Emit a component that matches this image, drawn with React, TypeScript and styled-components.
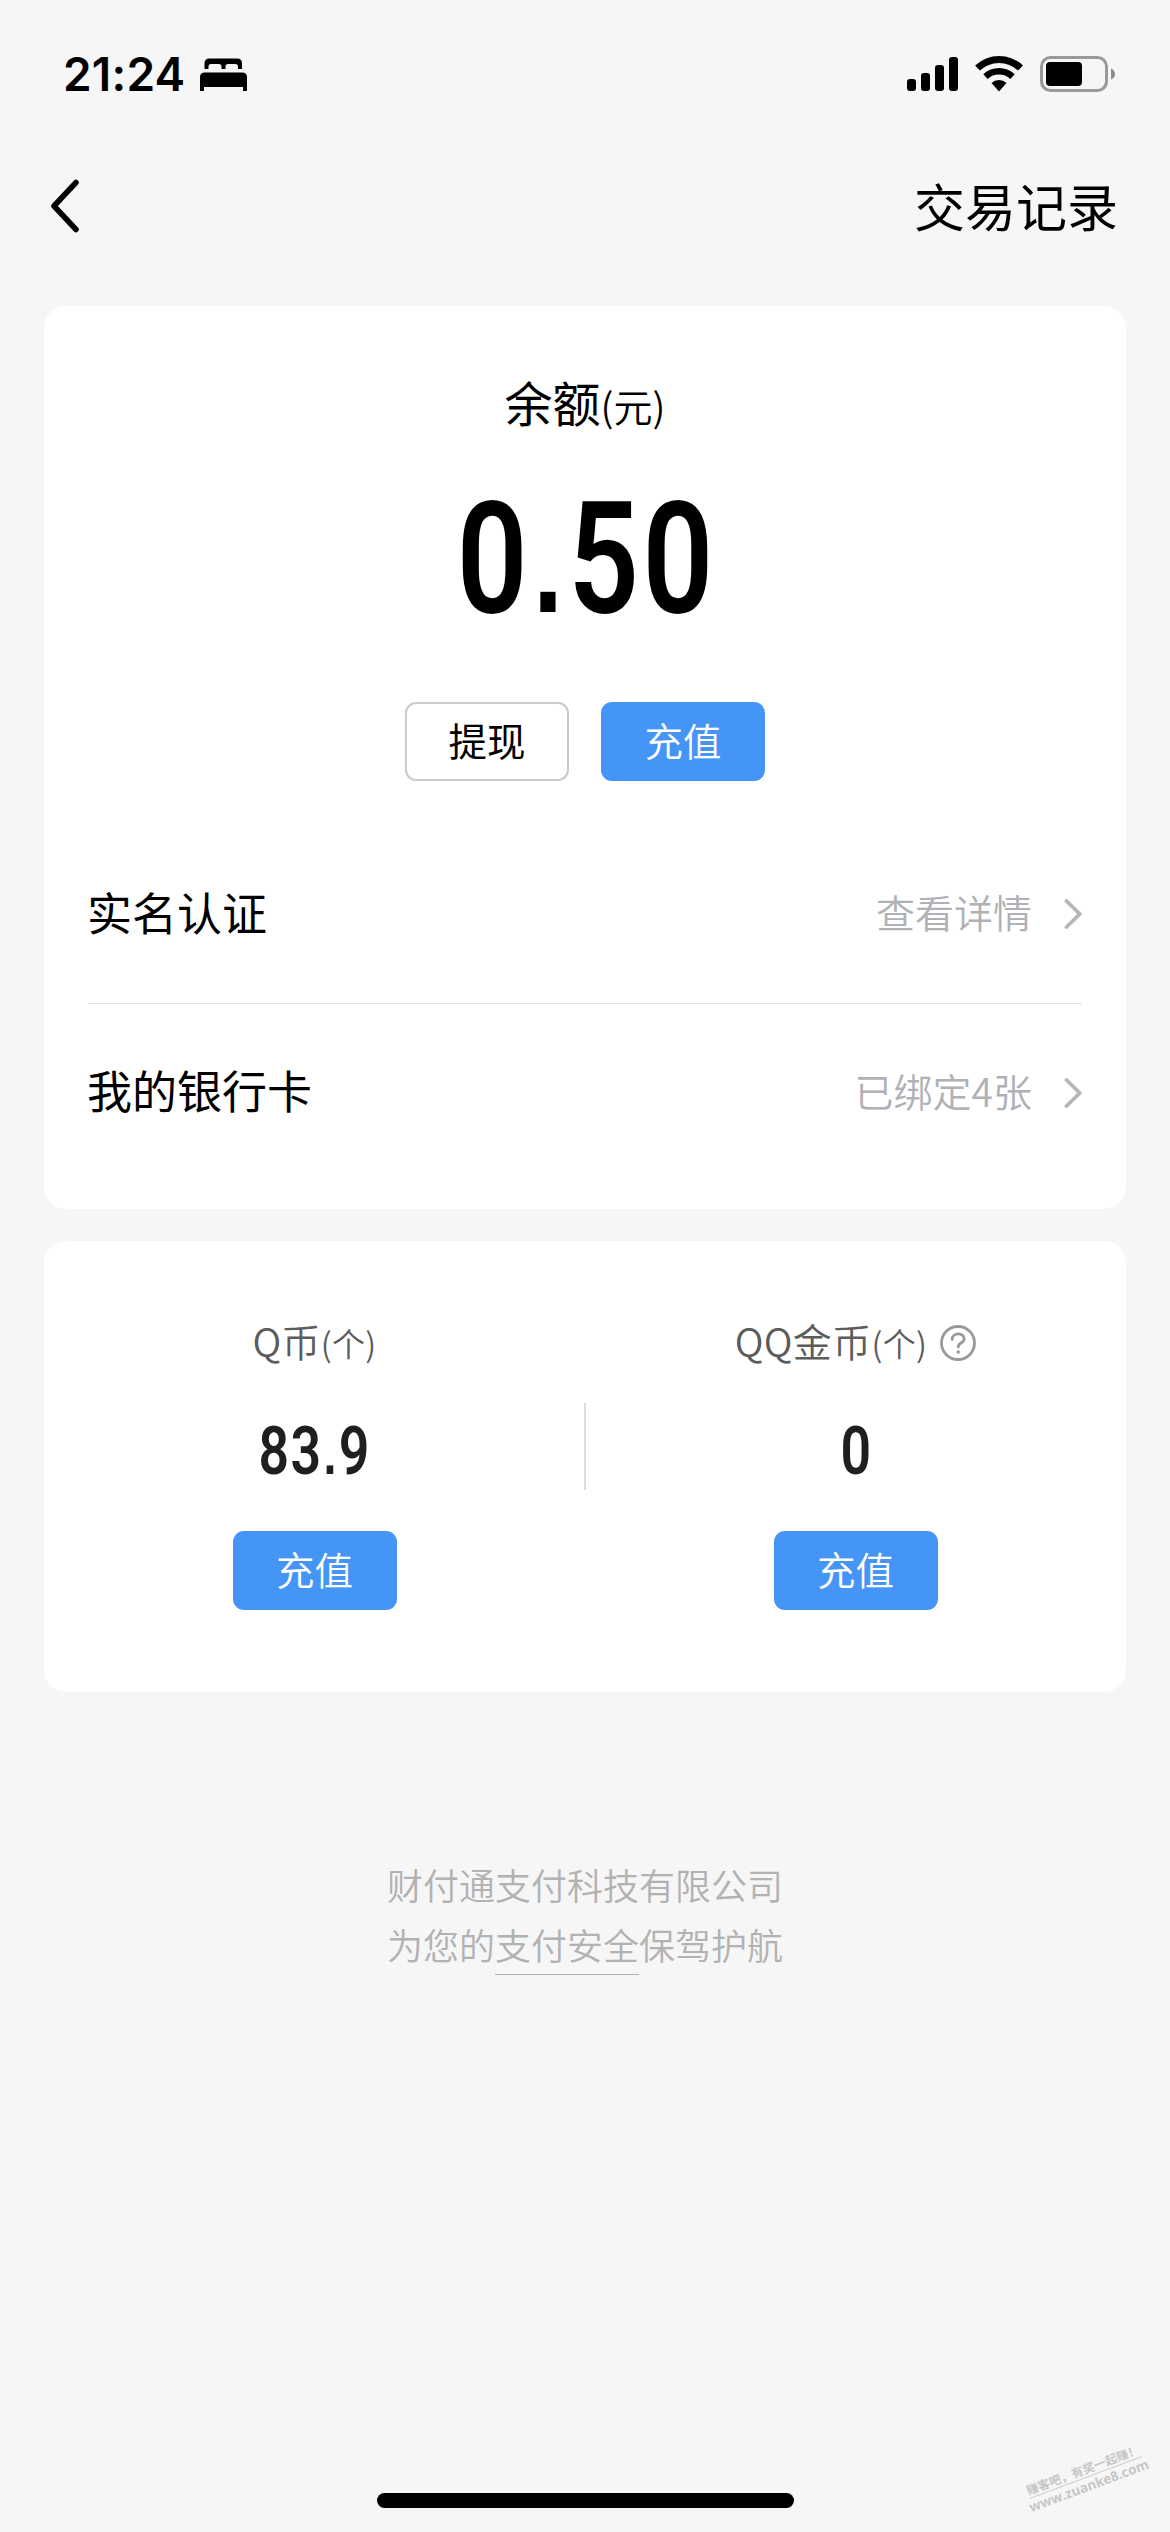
import React from "react";
import styled, { createGlobalStyle } from "styled-components";

const CJK = `"Noto Sans CJK SC", "Noto Sans", sans-serif`;

const GlobalStyle = createGlobalStyle`
  * { box-sizing: border-box; }
  html, body { margin: 0; padding: 0; background: #f6f6f6; }
  body { font-family: ${CJK}; color: #000; overflow: hidden; }
  button { font-family: inherit; margin: 0; padding: 0; }
  svg { display: block; flex: none; }
`;

const Screen = styled.div`
  width: 1170px;
  height: 2532px;
  background: #f6f6f6;
  display: flex;
  flex-direction: column;
  position: relative;
  overflow: hidden;
`;

const StatusBar = styled.div`
  height: 148px;
  flex: none;
  padding: 0 55px 0 63px;
  display: flex;
  align-items: center;
  justify-content: space-between;
`;

const StatusGroup = styled.div<{ $gap: number }>`
  display: flex;
  align-items: center;
  gap: ${(p) => p.$gap}px;
`;

const Clock = styled.span`
  font: 600 46px/56px Inter, sans-serif;
  letter-spacing: 0.2px;
`;

const NavBar = styled.header`
  height: 116px;
  flex: none;
  padding: 0 52px 0 51px;
  display: flex;
  align-items: center;
  justify-content: space-between;
`;

const NavLink = styled.span`
  font-size: 51px;
  line-height: 60px;
  padding-bottom: 3px;
`;

const Cards = styled.main`
  padding: 42px 44px 0;
  display: flex;
  flex-direction: column;
  gap: 32px;
`;

const Card = styled.section<{ $height: number }>`
  height: ${(p) => p.$height}px;
  background: #fff;
  border-radius: 22px;
`;

const BalanceCard = styled(Card)`
  padding: 62px 44px 0;
  display: flex;
  flex-direction: column;
`;

const BalanceLabel = styled.div`
  height: 66px;
  font-size: 48px;
  line-height: 66px;
  text-align: center;
`;

const Unit = styled.span<{ $size: number }>`
  font-size: ${(p) => p.$size}px;
  font-weight: 350;
`;

const Amount = styled.div<{ $size: number; $line: number; $color: string }>`
  height: ${(p) => p.$line}px;
  padding-left: ${(p) => p.$size * 0.026}px;
  font-family: Roboto, sans-serif;
  font-weight: 650;
  font-size: ${(p) => p.$size}px;
  line-height: ${(p) => p.$line}px;
  letter-spacing: 0.026em;
  color: ${(p) => p.$color};
  text-align: center;
  transform: scaleX(0.8);
`;

const Point = styled.span`
  font-family: "Liberation Sans", Arial, sans-serif;
  font-weight: 700;
  font-size: 0.87em;
  line-height: 1;
  margin: 0 0.02em;
`;

const BalanceAmount = styled.div`
  margin: 5px 0 23px;
`;

const ButtonRow = styled.div`
  display: flex;
  justify-content: center;
  gap: 32px;
`;

const Button = styled.button<{ $primary?: boolean }>`
  width: 164px;
  height: 79px;
  flex: none;
  border-radius: 11px;
  border: ${(p) => (p.$primary ? "none" : "2px solid #cacaca")};
  background: ${(p) => (p.$primary ? "#4595f7" : "#fff")};
  color: ${(p) => (p.$primary ? "#fff" : "#000")};
  font-size: 38.5px;
  font-weight: ${(p) => (p.$primary ? 350 : 400)};
  line-height: 1;
  display: flex;
  align-items: center;
  justify-content: center;
  padding-bottom: 4px;
`;

const Rows = styled.div`
  margin-top: 44px;
`;

const Row = styled.div`
  height: 178px;
  display: flex;
  align-items: center;
  justify-content: space-between;
  & + & { border-top: 1px solid #e3e3e3; }
`;

const RowTitle = styled.span`
  margin-left: -1px;
  padding-bottom: 5px;
  font-size: 45px;
  line-height: 60px;
`;

const RowValue = styled.span`
  display: flex;
  align-items: center;
  gap: 32px;
`;

const RowValueText = styled.span`
  padding-bottom: 6px;
  font-size: 39px;
  line-height: 54px;
  font-weight: 350;
  color: #b0b1b6;
`;

const CoinCard = styled(Card)`
  display: flex;
  align-items: flex-start;
`;

const CoinColumn = styled.div`
  flex: 1;
  padding-top: 74px;
  display: flex;
  flex-direction: column;
  align-items: center;
`;

const CoinLabel = styled.div`
  height: 56px;
  display: flex;
  align-items: center;
  gap: 13px;
  font-size: 39px;
  font-weight: 350;
  letter-spacing: 0.3px;
  line-height: 54px;
  color: #5c5c5c;
`;

const CoinName = styled.span`
  padding-bottom: 3px;
`;

const CoinDivider = styled.div`
  width: 2px;
  margin: 162px -1px 0;
  height: 87px;
  background: #dcdcdc;
`;

const Footer = styled.footer`
  margin-top: 162px;
  font-size: 36px;
  line-height: 60px;
  font-weight: 350;
  text-align: center;
  color: #b2b2b2;
`;

const Underlined = styled.span`
  display: inline-block;
  height: 60px;
  box-shadow: 0 1px 0 #b2b2b2;
`;

const Watermark = styled.div`
  position: absolute;
  left: 1026px;
  top: 2461px;
  width: 120px;
  transform: rotate(-20.5deg);
  color: #c6c6c6;
  font-weight: 700;
  display: flex;
  flex-direction: column;
  align-items: center;
  white-space: nowrap;
`;

const WatermarkTitle = styled.div`
  font-size: 12px;
  line-height: 16px;
  border-bottom: 1px solid #cfcfcf;
`;

const WatermarkUrl = styled.div`
  font: 700 13.4px/17px "Open Sans", sans-serif;
`;

const HomeIndicator = styled.div`
  position: absolute;
  left: 377px;
  bottom: 24px;
  width: 417px;
  height: 15px;
  border-radius: 8px;
  background: #000;
`;

const BedIcon = () => (
  <svg width="48" height="34" viewBox="0 -1 48 34">
    <path d="M4.500 11V5.500Q4.500 0.500 9.500 0.500H37Q42 0.500 42 5.500V11H38V8.500Q38 6 35.500 6H28Q25.500 6 25.500 8.500V11H21.500V8.500Q21.500 6 19 6H11Q8.500 6 8.500 8.500V11Z" />
    <path d="M0 33V19Q0 14.500 5 14.500H42Q47 14.500 47 19V33H43V29H4V33Z" />
  </svg>
);

const SignalIcon = () => (
  <svg width="51" height="36" viewBox="0 0 51 36">
    <rect x="0" y="23" width="9" height="12" rx="3" />
    <rect x="14" y="17" width="9" height="18" rx="3" />
    <rect x="28" y="9" width="9" height="26" rx="3" />
    <rect x="42" y="1" width="9" height="34" rx="3" />
  </svg>
);

const WifiIcon = () => (
  <svg width="48" height="38" viewBox="0 0 48 38">
    <path d="M0.100 10.400A35 35 0 0 1 47.900 10.400L43.100 15.500A28 28 0 0 0 4.900 15.500Z" />
    <path d="M8.300 19.200A23 23 0 0 1 39.700 19.200L35.300 23.900A16.500 16.500 0 0 0 12.700 23.900Z" />
    <path d="M16.500 28A11 11 0 0 1 31.500 28L24 36.500Z" />
  </svg>
);

const BatteryIcon = () => (
  <svg width="75" height="36" viewBox="0 0 75 36">
    <rect x="1.500" y="1.500" width="65" height="33" rx="9" fill="none" stroke="#999" strokeWidth="3" />
    <rect x="6" y="6" width="36" height="24" rx="4" />
    <path d="M71 12.500Q75 14 75 18T71 23.500z" fill="#8c8c8c" />
  </svg>
);

const BackIcon = () => (
  <svg width="28" height="54" viewBox="0 0 28 54" fill="none" stroke="#000" strokeWidth="5.500" strokeLinecap="round" strokeLinejoin="round">
    <path d="M25 3.500L3 27L25 50.500" />
  </svg>
);

const ChevronIcon = () => (
  <svg width="18" height="30" viewBox="0 0 18 30" fill="none" stroke="#b4b6bb" strokeWidth="3.800" strokeLinecap="round" strokeLinejoin="round">
    <path d="M2.500 2L15.800 15L2.500 28" />
  </svg>
);

const HelpIcon = () => (
  <svg width="36" height="36" viewBox="0 0 36 36" fill="none" stroke="#999" strokeWidth="2.800" strokeLinecap="round">
    <circle cx="18" cy="18" r="16.500" />
    <path d="M12.200 14.500C12.200 7 24.200 7 24.200 14C24.200 18 18.200 17.500 18.200 22" />
    <circle cx="18.200" cy="27" r="1.800" fill="#999" stroke="none" />
  </svg>
);

export default function App() {
  return (
    <>
      <GlobalStyle />
      <Screen>
        <StatusBar>
          <StatusGroup $gap={15}>
            <Clock>21:24</Clock>
            <BedIcon />
          </StatusGroup>
          <StatusGroup $gap={17}>
            <SignalIcon />
            <WifiIcon />
            <BatteryIcon />
          </StatusGroup>
        </StatusBar>
        <NavBar>
          <BackIcon />
          <NavLink>交易记录</NavLink>
        </NavBar>
        <Cards>
          <BalanceCard $height={903}>
            <BalanceLabel>
              余额<Unit $size={39}>(元)</Unit>
            </BalanceLabel>
            <BalanceAmount>
              <Amount $size={155} $line={240} $color="#000">0<Point>.</Point>50</Amount>
            </BalanceAmount>
            <ButtonRow>
              <Button>提现</Button>
              <Button $primary>充值</Button>
            </ButtonRow>
            <Rows>
              <Row>
                <RowTitle>实名认证</RowTitle>
                <RowValue>
                  <RowValueText>查看详情</RowValueText>
                  <ChevronIcon />
                </RowValue>
              </Row>
              <Row>
                <RowTitle>我的银行卡</RowTitle>
                <RowValue>
                  <RowValueText>已绑定4张</RowValueText>
                  <ChevronIcon />
                </RowValue>
              </Row>
            </Rows>
          </BalanceCard>
          <CoinCard $height={451}>
            <CoinColumn>
              <CoinLabel>
                <CoinName>Q币<Unit $size={33}>(个)</Unit></CoinName>
              </CoinLabel>
              <Amount $size={67} $line={160} $color="#1f1f1f">83<Point>.</Point>9</Amount>
              <Button $primary>充值</Button>
            </CoinColumn>
            <CoinDivider />
            <CoinColumn>
              <CoinLabel>
                <CoinName>QQ金币<Unit $size={33}>(个)</Unit></CoinName>
                <HelpIcon />
              </CoinLabel>
              <Amount $size={67} $line={160} $color="#1f1f1f">0</Amount>
              <Button $primary>充值</Button>
            </CoinColumn>
          </CoinCard>
        </Cards>
        <Footer>
          <div>财付通支付科技有限公司</div>
          <div>为您的<Underlined>支付安全</Underlined>保驾护航</div>
        </Footer>
        <Watermark>
          <WatermarkTitle>赚客吧，有奖一起赚！</WatermarkTitle>
          <WatermarkUrl>www.zuanke8.com</WatermarkUrl>
        </Watermark>
        <HomeIndicator />
      </Screen>
    </>
  );
}
